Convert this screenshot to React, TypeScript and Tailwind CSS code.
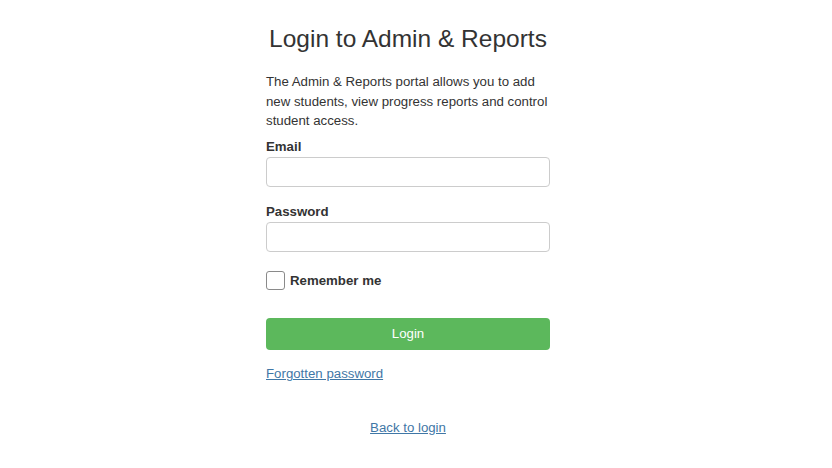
export default function App() {
  return (
    <div className="min-h-[468px] w-full bg-white font-['Liberation_Sans',Arial,sans-serif] text-[#333]">
      <div className="flex w-[816px] justify-center">
        <div className="flex w-[284px] flex-col pt-[24px]">
          <h1 className="text-center text-[24.5px] leading-[30px] text-[#333]">Login to Admin &amp; Reports</h1>

          <p className="mt-[18px] text-[13.25px] leading-[19.5px]">
            The Admin &amp; Reports portal allows you to add new students, view progress reports and control
            student access.
          </p>

          <label className="mt-[6.5px] block text-[13.25px] font-bold leading-[19px]">Email</label>
          <input
            type="email"
            className="mt-[1px] h-[30px] w-full rounded-[4px] border border-[#ccc] px-3 outline-none"
          />

          <label className="mt-[15px] block text-[13.25px] font-bold leading-[19px]">Password</label>
          <input
            type="password"
            className="mt-[1px] h-[30px] w-full rounded-[4px] border border-[#ccc] px-3 outline-none"
          />

          <div className="mt-[18px] flex h-[20px] items-center gap-[5px]">
            <span className="block h-[19px] w-[19px] rounded-[3px] border border-[#8a8a8a] bg-white" />
            <span className="text-[13.25px] font-bold leading-[19px]">Remember me</span>
          </div>

          <button className="mt-[28px] h-[32px] w-full rounded-[4px] bg-[#5cb85c] text-[13.25px] text-white">
            Login
          </button>

          <div className="mt-[14px] text-[13.25px] leading-[19px]">
            <a href="#" className="text-[#3f77a6] underline">Forgotten password</a>
          </div>

          <div className="mt-[35px] text-center text-[13.25px] leading-[19px]">
            <a href="#" className="text-[#3f77a6] underline">Back to login</a>
          </div>
        </div>
      </div>
    </div>
  )
}
